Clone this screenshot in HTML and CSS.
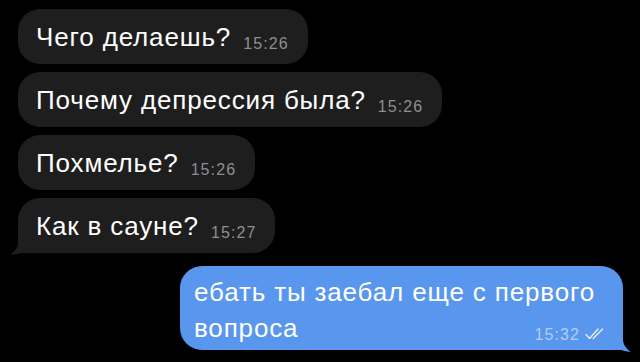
FILE: index.html
```html
<!DOCTYPE html>
<html lang="ru">
<head>
  <meta charset="UTF-8">
  <title>Чат</title>
  <meta name="viewport" content="width=device-width, initial-scale=1.0">
  <link rel="stylesheet" href="styles.css">
</head>
<body>
  <main class="chat">
    <div class="msg in">
      <span class="text">Чего делаешь?</span>
      <span class="time">15:26</span>
    </div>
    <div class="msg in">
      <span class="text">Почему депрессия была?</span>
      <span class="time">15:26</span>
    </div>
    <div class="msg in">
      <span class="text">Похмелье?</span>
      <span class="time">15:26</span>
    </div>
    <div class="msg in tail">
      <span class="text">Как в сауне?</span>
      <span class="time">15:27</span>
      <svg class="tail-left" width="24" height="23" viewBox="0 0 24 23">
        <path d="M8 0 H24 V19 H18 C16 19 14.5 18.8 13.5 18.3 C10 20.6 5 21.8 0 21.8 C4.5 19 8 15 8 9 Z" fill="#1e1e1e"/>
      </svg>
    </div>

    <div class="msg out">
      <div class="line text">ебать ты заебал еще с первого</div>
      <div class="line last">
        <span class="text">вопроса</span>
        <span class="meta">
          <span class="time">15:32</span>
          <svg class="checks" width="20" height="12" viewBox="0 0 20 12">
            <path d="M1 6.5 L4.6 10.5 L13 1 M8.2 10.5 L17.5 1" fill="none" stroke="#e8f0fd" stroke-width="1.3" stroke-linecap="round" stroke-linejoin="round"/>
          </svg>
        </span>
      </div>
      <svg class="tail-right" width="24" height="23" viewBox="0 0 24 23">
        <path d="M16 0 H0 V19 H6 C8 19 9.5 18.8 10.5 18.3 C14 20.6 19 21.8 24 21.8 C19.5 19 16 15 16 9 Z" fill="#5996ee"/>
      </svg>
    </div>
  </main>
</body>
</html>
```

FILE: styles.css
```css
*{box-sizing:border-box;margin:0;padding:0}
html,body{height:100%}
body{
  background:#000;color:#fff;
  font-family:"Liberation Sans",Arial,sans-serif;
  overflow:hidden;
}

.chat{
  display:flex;flex-direction:column;align-items:flex-start;
  gap:8px;padding:9px 17px 0 18px;
}

.msg{position:relative;border-radius:22px}
.msg .text{font-size:26px;line-height:28px;letter-spacing:0.85px}
.msg .time{font-size:16px;line-height:16px;letter-spacing:1.1px}

.msg.in{
  display:flex;align-items:flex-end;
  height:55px;padding:13px 19px 13px 18px;
  background:#1e1e1e;
}
.msg.in .time{margin-left:12px;margin-bottom:-1px;color:#8e8e93}
.msg.tail{border-bottom-left-radius:0}
.tail-left{position:absolute;left:-8px;bottom:-3px}

.msg.out{
  align-self:flex-end;
  width:443px;margin-top:5px;
  padding:8px 18px 4px 14px;
  background:#5996ee;border-bottom-right-radius:0;
}
.msg.out .text{line-height:36px}
.line.last{display:flex;justify-content:space-between;align-items:flex-end}
.meta{display:flex;align-items:center;gap:5px;margin-bottom:3px}
.msg.out .time{color:#b3cdf6}
.checks{margin-top:-2px}
.tail-right{position:absolute;right:-8px;bottom:-3px}
```
